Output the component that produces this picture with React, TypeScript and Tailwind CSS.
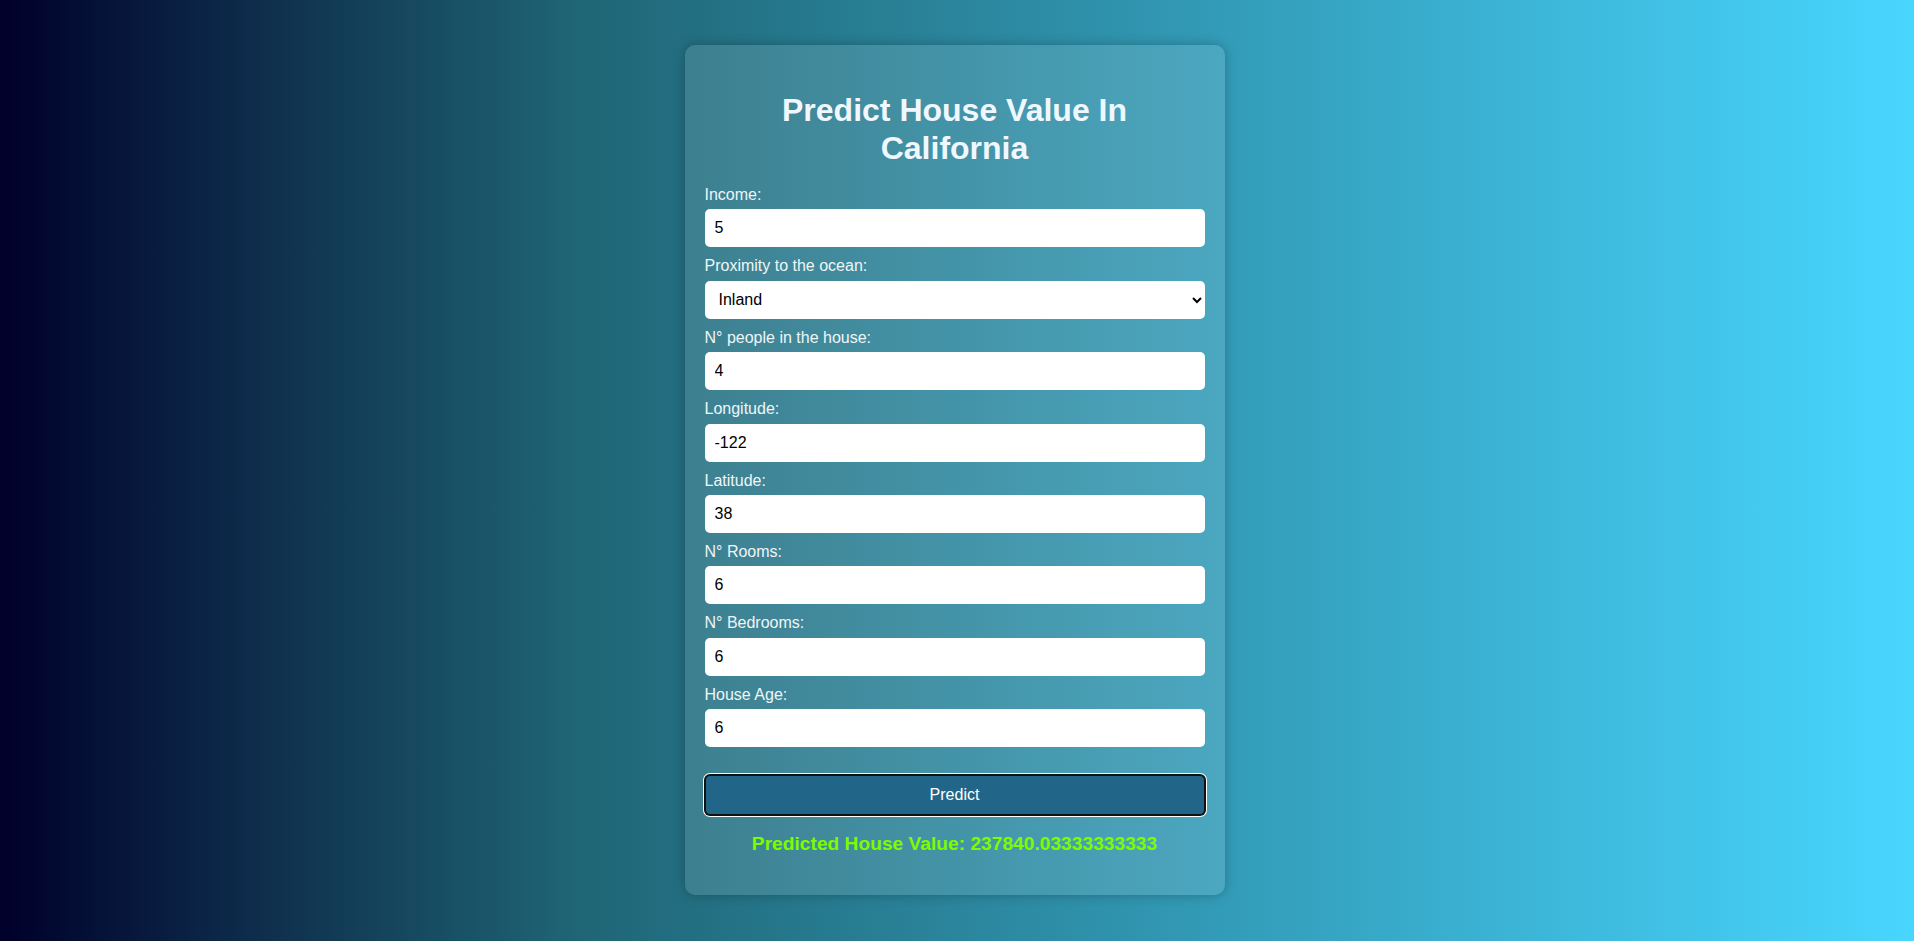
import { useState } from "react";

const fields = [
  { id: "income", label: "Income:", value: "5" },
  { id: "ocean", label: "Proximity to the ocean:", value: "Inland", select: true },
  { id: "people", label: "N° people in the house:", value: "4" },
  { id: "longitude", label: "Longitude:", value: "-122" },
  { id: "latitude", label: "Latitude:", value: "38" },
  { id: "rooms", label: "N° Rooms:", value: "6" },
  { id: "bedrooms", label: "N° Bedrooms:", value: "6" },
  { id: "age", label: "House Age:", value: "6" },
];

const oceanOptions = ["<1H Ocean", "Inland", "Island", "Near Bay", "Near Ocean"];

export default function App() {
  const [values, setValues] = useState<Record<string, string>>(
    Object.fromEntries(fields.map((f) => [f.id, f.value]))
  );

  return (
    <div className="flex min-h-screen items-start justify-center bg-[linear-gradient(to_right,#00002a_0%,#1f6575_30%,#48d6ff_100%)] pt-[45px] font-['Liberation_Sans',Arial,sans-serif]">
      <div className="mr-[5px] w-[540px] rounded-[10px] bg-white/[0.12] px-5 pt-[25px] pb-[22px] shadow-[0_0_12px_rgba(0,0,0,0.25)]">
        <h1 className="mt-[21px] mb-[19px] text-center text-[32px] font-bold leading-[38px] text-[#f0f8ff]">
          Predict House Value In California
        </h1>

        <form onSubmit={(e) => e.preventDefault()}>
          {fields.map((f) => (
            <div key={f.id} className="mb-[10px]">
              <label
                htmlFor={f.id}
                className="mb-[5px] block text-base leading-[1.15] text-[#eef6f8]"
              >
                {f.label}
              </label>
              {f.select ? (
                <select
                  id={f.id}
                  value={values[f.id]}
                  onChange={(e) => setValues({ ...values, [f.id]: e.target.value })}
                  className="block h-[38px] w-full rounded-[5px] bg-white px-[10px] text-base text-black"
                >
                  {oceanOptions.map((o) => (
                    <option key={o}>{o}</option>
                  ))}
                </select>
              ) : (
                <input
                  id={f.id}
                  type="text"
                  value={values[f.id]}
                  onChange={(e) => setValues({ ...values, [f.id]: e.target.value })}
                  className="block h-[38px] w-full rounded-[5px] bg-white px-[10px] text-base text-black outline-none"
                />
              )}
            </div>
          ))}

          <button
            type="submit"
            className="mt-[28px] block h-[40px] w-full rounded-[5px] border border-[#111] bg-[#216688] text-base text-white shadow-[0_0_0_1px_#111,0_0_0_2px_#fff]"
          >
            Predict
          </button>
        </form>

        <p className="mt-[18px] mb-[18px] text-center text-[19.2px] font-bold leading-[1.15] text-[#7cfc00]">
          Predicted House Value: 237840.03333333333
        </p>
      </div>
    </div>
  );
}
